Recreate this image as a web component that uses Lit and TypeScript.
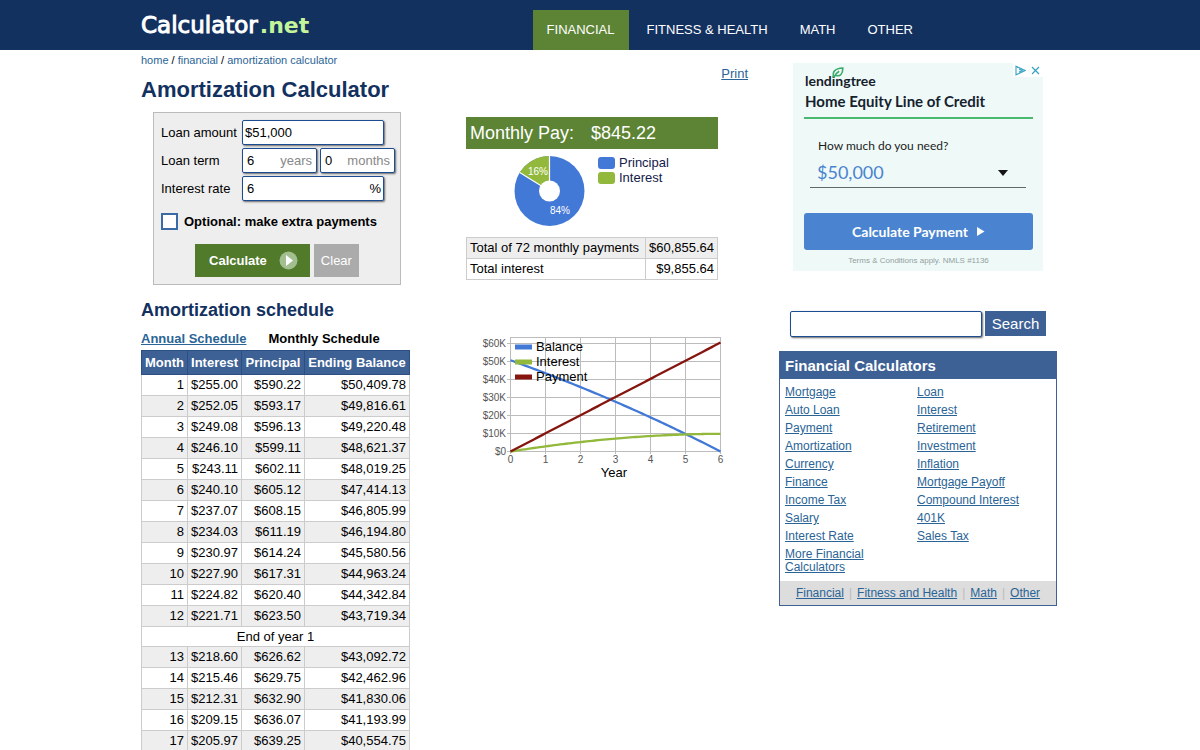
import { LitElement, html, svg, css } from "lit";
import { customElement, state } from "lit/decorators.js";

const LOAN = 51000;
const RATE = 0.06 / 12;
const MONTHS = 72;
const PAYMENT = (LOAN * RATE) / (1 - Math.pow(1 + RATE, -MONTHS));

interface Row {
  month: number;
  interest: number;
  principal: number;
  balance: number;
  totalInterest: number;
}

const rows: Row[] = [];
let balance = LOAN;
let totalInterest = 0;
for (let month = 1; month <= MONTHS; month++) {
  const interest = balance * RATE;
  const principal = PAYMENT - interest;
  balance -= principal;
  totalInterest += interest;
  rows.push({ month, interest, principal, balance: Math.max(balance, 0), totalInterest });
}

const money = (n: number) =>
  "$" + n.toLocaleString("en-US", { minimumFractionDigits: 2, maximumFractionDigits: 2 });

const leftLinks = ["Mortgage", "Auto Loan", "Payment", "Amortization", "Currency", "Finance", "Income Tax", "Salary", "Interest Rate", "More Financial Calculators"];
const rightLinks = ["Loan", "Interest", "Retirement", "Investment", "Inflation", "Mortgage Payoff", "Compound Interest", "401K", "Sales Tax"];

@customElement("donut-chart")
class DonutChart extends LitElement {
  static styles = css`
    :host { display: block; }
    svg { display: block; }
    .pct { font-size: 10px; fill: #fff; text-anchor: middle; }
  `;
  render() {
    const a = (totalInterest / (PAYMENT * MONTHS)) * Math.PI * 2;
    const x = 35.5 - 35 * Math.sin(a);
    const y = 36 - 35 * Math.cos(a);
    return html`<svg width="72" height="72" viewBox="0 0 72 72" role="img" aria-label="Principal 84%, interest 16%">
      <circle cx="35.5" cy="36" r="35" fill="#4279d6" />
      <path d="M35.5 36 L${x} ${y} A35 35 0 0 1 35.5 1 Z" fill="#92b93b" />
      <path d="M${x} ${y} L35.5 36 V0" fill="none" stroke="#fff" stroke-width="1.2" />
      <circle cx="35.5" cy="36" r="10.5" fill="#fff" />
      <text class="pct" x="24" y="20">16%</text>
      <text class="pct" x="46" y="59">84%</text>
    </svg>`;
  }
}

@customElement("balance-chart")
class BalanceChart extends LitElement {
  static styles = css`
    :host { display: block; }
    svg { display: block; }
    .grid { stroke: #bcbcbc; stroke-width: 1; }
    .tick { font-size: 10px; fill: #555; }
    .right { text-anchor: end; }
    .mid { text-anchor: middle; }
    .name { font-size: 13px; fill: #000; }
    .line { fill: none; stroke-width: 2.3; }
  `;
  render() {
    const px = (m: number) => 44.5 + (m / 12) * 35;
    const py = (v: number) => 115.5 - (v / 10000) * 17.9;
    const path = (f: (r: Row) => number, start: number) =>
      `M${px(0)} ${py(start)} ` + rows.map((r) => `L${px(r.month).toFixed(2)} ${py(f(r)).toFixed(2)}`).join(" ");
    const legend: [string, string][] = [["Balance", "#4279d6"], ["Interest", "#92b93b"], ["Payment", "#86150f"]];
    return html`<svg width="264" height="146" viewBox="0 0 264 146" role="img" aria-label="Balance, interest and payment by year">
      ${[0, 1, 2, 3, 4, 5, 6].map((i) => {
        const x = 44.5 + i * 35;
        const y = Math.round(py(i * 10000)) - 0.5;
        return svg`
          <line class="grid" x1=${x} x2=${x} y1="1.5" y2="118" />
          <line class="grid" x1="41" x2="254.5" y1=${y} y2=${y} />
          <text class="tick mid" x=${x} y="127">${i}</text>
          <text class="tick right" x="40" y=${y + 3}>${i ? `$${i}0K` : "$0"}</text>`;
      })}
      <line class="grid" x1="44" x2="255" y1="1.5" y2="1.5" />
      <path class="line" stroke="#4279d6" d=${path((r) => r.balance, LOAN)} />
      <path class="line" stroke="#92b93b" d=${path((r) => r.totalInterest, 0)} />
      <path class="line" stroke="#86150f" d=${path((r) => r.month * PAYMENT, 0)} />
      ${legend.map(([name, color], i) => svg`
        <rect x="49" y=${8.5 + i * 15} width="17" height="5" fill=${color} />
        <text class="name" x="70" y=${15 + i * 15}>${name}</text>`)}
      <text class="name mid" x="148" y="141">Year</text>
    </svg>`;
  }
}

@customElement("loan-ad")
class LoanAd extends LitElement {
  static styles = css`
    :host { display: block; }
    .ad { box-sizing: border-box; background: #effaf8; padding: 0 10px 5px 11px; font-family: Lato, sans-serif; color: #16212e; }
    .top { display: flex; justify-content: space-between; height: 28px; }
    .brand { position: relative; font: 700 14px/20px Lato, sans-serif; padding: 8px 0 0 1px; color: #16202c; }
    .leaf { position: absolute; left: 28px; top: 4px; }
    .marks { display: flex; gap: 4px; height: 14px; margin-right: -10px; padding: 0 2px; align-items: center; background: #fff; }
    h3 { margin: 0; font-size: 15px; line-height: 20px; font-weight: 700; padding-bottom: 6px; border-bottom: 2px solid #4bb86f; padding-left: 1px; }
    .field { display: flex; flex-direction: column; position: relative; margin: 17px 7px 25px 6px; }
    label { font-size: 12px; line-height: 20px; padding-left: 8px; color: #1c1c1c; }
    select { appearance: none; border: 0; border-bottom: 1px solid #5d6b6b; background: none; font: 18px/24px Lato, sans-serif; color: #4a83cf; padding: 4px 6px 3px 7px; margin: 0; border-radius: 0; }
    .arrow { position: absolute; right: 18px; bottom: 12px; pointer-events: none; }
    .go { display: flex; width: 100%; height: 37px; align-items: center; justify-content: center; gap: 9px; border: 0; border-radius: 3px; background: #4a84d0; color: #fff; font: 700 14px Lato, sans-serif; }
    .fine { margin: 0; padding-top: 6px; font: 8px/10px "Liberation Sans", Arial, sans-serif; color: #93a09f; text-align: center; }
  `;
  render() {
    return html`<section class="ad" aria-label="Advertisement">
      <div class="top">
        <div class="brand">lendingtree
          <svg class="leaf" width="12" height="11" viewBox="0 0 12 11"><path d="M1.8 10.5 C0 5 2.5 1.5 10.8 1 C11 7 8 9.8 4 8.4 M1.8 10.5 C3 7.5 4.6 5.6 7.2 4.2" fill="none" stroke="#3bab6b" stroke-width="1.6" /></svg>
        </div>
        <div class="marks">
          <svg width="11" height="11" viewBox="0 0 11 11"><path d="M1 1.2 L10 5.5 L1 9.8 Z M4 4 L7 5.5 L4 7" fill="none" stroke="#35a3c6" stroke-width="1.1" /></svg>
          <svg width="11" height="11" viewBox="0 0 11 11"><path d="M2 2 L9 9 M9 2 L2 9" stroke="#35a3c6" stroke-width="1.2" /></svg>
        </div>
      </div>
      <h3>Home Equity Line of Credit</h3>
      <div class="field">
        <label for="need">How much do you need?</label>
        <select id="need"><option>$50,000</option><option>$100,000</option></select>
        <svg class="arrow" width="10" height="6" viewBox="0 0 10 6"><path d="M0 0 H10 L5 6 Z" fill="#151515" /></svg>
      </div>
      <button class="go" type="button">Calculate Payment
        <svg width="8" height="9" viewBox="0 0 8 9"><path d="M0 0 L7.5 4.5 L0 9 Z" fill="#fff" /></svg>
      </button>
      <p class="fine">Terms &amp; Conditions apply. NMLS #1136</p>
    </section>`;
  }
}

@customElement("app-root")
class AppRoot extends LitElement {
  @state() private extra = false;

  static styles = css`
    :host { display: block; font: 13px/15px "Liberation Sans", Arial, sans-serif; color: #000; background: #fff; }
    a { color: #2a6496; }
    .bar { background: #13315f; }
    .wrap { max-width: 918px; margin: 0 auto; display: flex; }
    .head { height: 50px; justify-content: space-between; align-items: flex-end; }
    .logo { display: flex; align-items: baseline; gap: 2px; font: 23px/30px "DejaVu Sans", sans-serif; color: #fff; -webkit-text-stroke: 1px #fff; text-decoration: none; align-self: center; }
    .logo b { color: #c5f59a; font-size: 22px; font-weight: 700; -webkit-text-stroke: 0; }
    nav { display: flex; gap: 4px; margin-right: 132px; }
    nav a { color: #fff; text-decoration: none; padding: 0 14px; line-height: 40px; }
    nav .on { background: #5d8435; }
    .main { flex: 1; max-width: 607px; }
    .crumbs { font-size: 11px; line-height: 14px; padding-top: 3px; }
    .crumbs a { text-decoration: none; }
    .titlebar { display: flex; justify-content: space-between; align-items: flex-start; }
    h1 { margin: 0; font-size: 22px; line-height: 26px; color: #13315f; padding: 10px 0 7px; }
    .print { margin-top: -1px; line-height: 15px; }
    .pair { display: grid; grid-template-columns: 269px 252px; column-gap: 56px; align-items: start; }
    h2 { margin: 0; font-size: 18px; line-height: 22px; color: #13315f; }

    form.calc { margin: 2px 9px 0 12px; border: 1px solid #bbb; background: #eee; padding: 7px 4px 7px 7px; }
    .fields { display: grid; grid-template-columns: 81px 1fr; gap: 3px 0; align-items: center; }
    .cell { display: flex; gap: 3px; }
    .box { position: relative; display: block; width: 75px; }
    .box.wide { width: 142px; }
    .text { box-sizing: border-box; display: block; width: 100%; height: 25px; margin: 0; border: 1px solid #1c4d92; border-radius: 2px; box-shadow: 1px 1px 2px #666; background: #fff; font: 13px "Liberation Sans", Arial, sans-serif; color: #000; padding: 0 4px; }
    .text.money { padding-left: 2px; }
    .unit { position: absolute; right: 5px; top: 5px; color: #888; pointer-events: none; }
    .unit.dark { right: 3px; color: #000; }
    .opt { display: flex; align-items: center; gap: 6px; font-weight: 700; padding: 12px 0 14px; }
    .opt input { appearance: none; width: 17px; height: 17px; margin: 0; border: 2px solid #3a6ba5; background: #fff; }
    .opt input:checked { background: #3a6ba5; }
    .actions { display: flex; justify-content: center; gap: 4px; padding-right: 3px; }
    .actions button { border: 0; height: 33px; font: 13px "Liberation Sans", Arial, sans-serif; color: #fff; background: #ababab; padding: 0 7px; }
    .actions .go { display: flex; align-items: center; gap: 12px; background: #517a2b; font-weight: 700; padding: 0 12px 0 14px; }

    .pay { margin-top: 7px; background: #5d8435; color: #fff; font-size: 18px; line-height: 32px; padding-left: 4px; display: flex; gap: 17px; }
    .chart { display: flex; gap: 12px; padding: 6px 0 10px 48px; }
    .legend { list-style: none; margin: 0; padding: 0; color: #13204a; }
    .legend li { display: flex; align-items: center; gap: 4px; }
    .swatch { width: 17px; height: 12px; border-radius: 3px; }
    .blue { background: #4279d6; }
    .green { background: #92b93b; }

    table { border-collapse: collapse; width: 100%; table-layout: fixed; }
    td, th { border: 1px solid #ccc; padding: 0 3px; height: 20px; line-height: 18px; text-align: right; white-space: nowrap; }
    .totals td:first-child { text-align: left; }
    .shade td { background: #eee; }
    .c1 { width: 179px; }

    .sched { padding-top: 14px; }
    .tabs { display: flex; gap: 22px; font-weight: 700; line-height: 15px; padding: 10px 0 4px; }
    .plan thead th { background: #3d6194; border-color: #2b4f83; color: #fff; height: 23px; padding: 0 2px; text-align: center; }
    .plan .year td { height: 19px; text-align: center; }
    .m { width: 46px; } .i { width: 54px; } .p { width: 63px; }
    .graph { padding-top: 51px; }

    aside { width: 278px; margin-left: 31px; padding-top: 13px; }
    .slot { padding: 0 14px; }
    .search { display: flex; gap: 3px; padding: 40px 11px 14px; }
    .search .text { flex: 1; height: 26px; }
    .search button { border: 0; height: 25px; width: 61px; padding: 0; background: #3d6194; color: #fff; font: 15px "Liberation Sans", Arial, sans-serif; }
    .side { border: 1px solid #3d6194; }
    .side h2 { background: #3d6194; color: #fff; font-size: 15px; line-height: 27px; padding-left: 5px; }
    .lists { display: grid; grid-template-columns: 106px 1fr; column-gap: 26px; padding: 7px 5px; font-size: 12px; line-height: 13px; }
    .lists ul { list-style: none; margin: 0; padding: 0; display: flex; flex-direction: column; gap: 5px; }
    .foot { display: flex; justify-content: center; gap: 5px; background: #ddd; font-size: 12px; line-height: 24px; color: #bbb; }
  `;

  private link(name: string) {
    return html`<li><a href="#">${name}</a></li>`;
  }

  private row(r: Row) {
    return html`<tr class=${r.month % 2 === (r.month > 12 ? 1 : 0) ? "shade" : ""}>
        <td>${r.month}</td><td>${money(r.interest)}</td><td>${money(r.principal)}</td><td>${money(r.balance)}</td>
      </tr>
      ${r.month % 12 === 0 ? html`<tr class="year"><td colspan="4">End of year ${r.month / 12}</td></tr>` : ""}`;
  }

  render() {
    return html`
      <header class="bar">
        <div class="wrap head">
          <a class="logo" href="#"><span>Calculator</span><b>.net</b></a>
          <nav>
            <a class="on" href="#">FINANCIAL</a><a href="#">FITNESS &amp; HEALTH</a><a href="#">MATH</a><a href="#">OTHER</a>
          </nav>
        </div>
      </header>
      <div class="wrap">
        <main class="main">
          <div class="crumbs"><a href="#">home</a> / <a href="#">financial</a> / <a href="#">amortization calculator</a></div>
          <div class="titlebar"><h1>Amortization Calculator</h1><a class="print" href="#">Print</a></div>
          <div class="pair">
            <form class="calc" @submit=${(e: Event) => e.preventDefault()}>
              <div class="fields">
                <label for="amount">Loan amount</label>
                <div class="cell"><span class="box wide"><input class="text money" id="amount" type="text" value="$51,000" /></span></div>
                <label for="years">Loan term</label>
                <div class="cell">
                  <span class="box"><input class="text" id="years" type="text" value="6" /><span class="unit">years</span></span>
                  <span class="box"><input class="text" type="text" aria-label="Loan term months" value="0" /><span class="unit">months</span></span>
                </div>
                <label for="rate">Interest rate</label>
                <div class="cell"><span class="box wide"><input class="text" id="rate" type="text" value="6" /><span class="unit dark">%</span></span></div>
              </div>
              <label class="opt"><input type="checkbox" .checked=${this.extra} @change=${() => (this.extra = !this.extra)} />Optional: make extra payments</label>
              <div class="actions">
                <button class="go" type="submit">Calculate
                  <svg width="19" height="19" viewBox="0 0 19 19"><circle cx="9.5" cy="9.5" r="9" fill="#a3bf90" /><path d="M7 4 L14 9.5 L7 15 Z" fill="#fff" /></svg>
                </button>
                <button type="reset">Clear</button>
              </div>
            </form>
            <section>
              <div class="pay"><span>Monthly Pay:</span><span>${money(PAYMENT)}</span></div>
              <div class="chart">
                <donut-chart></donut-chart>
                <ul class="legend">
                  <li><span class="swatch blue"></span>Principal</li>
                  <li><span class="swatch green"></span>Interest</li>
                </ul>
              </div>
              <table class="totals">
                <colgroup><col class="c1" /><col /></colgroup>
                <tbody>
                  <tr class="shade"><td>Total of 72 monthly payments</td><td>${money(PAYMENT * MONTHS)}</td></tr>
                  <tr><td>Total interest</td><td>${money(totalInterest)}</td></tr>
                </tbody>
              </table>
            </section>
          </div>
          <div class="pair">
            <section class="sched">
              <h2>Amortization schedule</h2>
              <div class="tabs"><a href="#">Annual Schedule</a><span>Monthly Schedule</span></div>
              <table class="plan">
                <colgroup><col class="m" /><col class="i" /><col class="p" /><col /></colgroup>
                <thead><tr><th>Month</th><th>Interest</th><th>Principal</th><th>Ending Balance</th></tr></thead>
                <tbody>${rows.map((r) => this.row(r))}</tbody>
              </table>
            </section>
            <div class="graph"><balance-chart></balance-chart></div>
          </div>
        </main>
        <aside>
          <div class="slot"><loan-ad></loan-ad></div>
          <form class="search" role="search" @submit=${(e: Event) => e.preventDefault()}>
            <input class="text" type="text" aria-label="Search calculators" /><button type="submit">Search</button>
          </form>
          <section class="side">
            <h2>Financial Calculators</h2>
            <div class="lists">
              <ul>${leftLinks.map((n) => this.link(n))}</ul>
              <ul>${rightLinks.map((n) => this.link(n))}</ul>
            </div>
            <div class="foot"><a href="#">Financial</a>|<a href="#">Fitness and Health</a>|<a href="#">Math</a>|<a href="#">Other</a></div>
          </section>
        </aside>
      </div>`;
  }
}
